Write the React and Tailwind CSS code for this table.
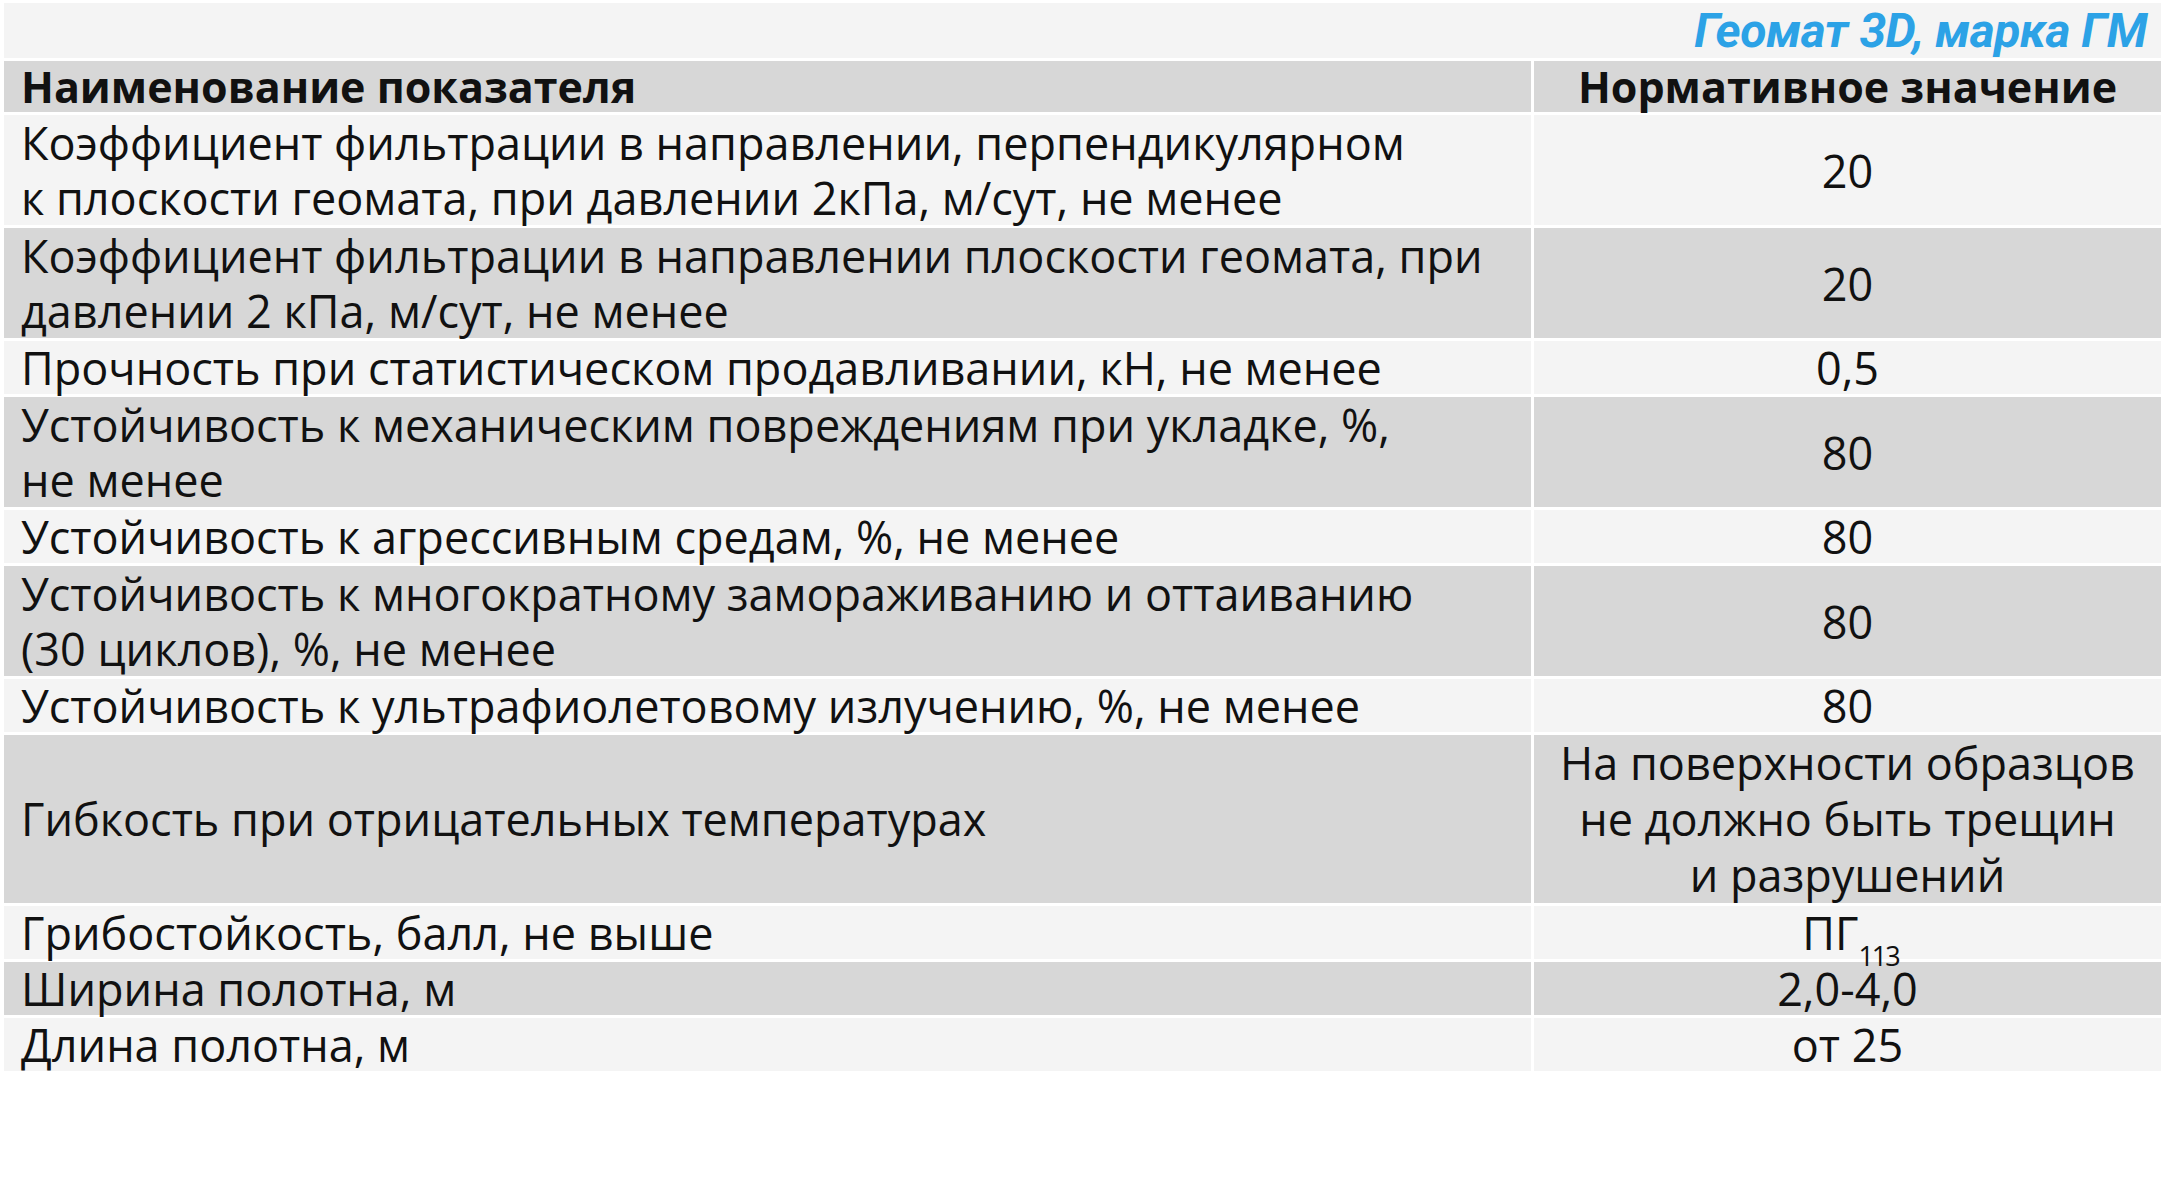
const rows = [
  { name: ['Коэффициент фильтрации в направлении, перпендикулярном', 'к плоскости геомата, при давлении 2кПа, м/сут, не менее'], value: ['20'] },
  { name: ['Коэффициент фильтрации в направлении плоскости геомата, при', 'давлении 2 кПа, м/сут, не менее'], value: ['20'] },
  { name: ['Прочность при статистическом продавливании, кН, не менее'], value: ['0,5'] },
  { name: ['Устойчивость к механическим повреждениям при укладке, %,', 'не менее'], value: ['80'] },
  { name: ['Устойчивость к агрессивным средам, %, не менее'], value: ['80'] },
  { name: ['Устойчивость к многократному замораживанию и оттаиванию', '(30 циклов), %, не менее'], value: ['80'] },
  { name: ['Устойчивость к ультрафиолетовому излучению, %, не менее'], value: ['80'] },
  { name: ['Гибкость при отрицательных температурах'], value: ['На поверхности образцов', 'не должно быть трещин', 'и разрушений'] },
  { name: ['Грибостойкость, балл, не выше'], value: 'pg' },
  { name: ['Ширина полотна, м'], value: ['2,0-4,0'] },
  { name: ['Длина полотна, м'], value: ['от 25'] },
]

// line height per number of lines in the row
const leading = { 1: 'leading-[53px]', 2: 'leading-[55px]', 3: 'leading-[56px]' }

function Lines({ lines }) {
  return lines.map((l, i) => <div key={i} className="whitespace-nowrap">{l}</div>)
}

export default function App() {
  return (
    <div className="min-h-screen bg-white pt-[3px] pl-[4px] font-['Open_Sans',sans-serif] text-[#111]">
      <div className="grid w-[2157px] grid-cols-[1527px_627px] gap-[3px]">
        <div className="col-span-2 flex h-[55px] items-center justify-end bg-[#f4f4f4] pr-[14px]">
          <span className="font-['Liberation_Sans_Narrow','Roboto',sans-serif] text-[48px] font-bold italic leading-none tracking-[-0.5px] text-[#2ca2e6]">
            Геомат 3D, марка ГМ
          </span>
        </div>

        <div className="bg-[#d7d7d7] pl-[17px] text-[43px] font-bold leading-[51px]">Наименование показателя</div>
        <div className="bg-[#d7d7d7] text-center text-[43px] font-bold leading-[51px]">Нормативное значение</div>

        {rows.map((r, i) => {
          const bg = i % 2 === 0 ? 'bg-[#f4f4f4]' : 'bg-[#d7d7d7]'
          const n = Math.max(r.name.length, Array.isArray(r.value) ? r.value.length : 1)
          const lh = leading[n]
          return [
            <div key={'n' + i} className={`${bg} ${lh} flex flex-col justify-center pl-[17px] text-[45px]`}>
              <Lines lines={r.name} />
            </div>,
            <div key={'v' + i} className={`${bg} ${lh} flex flex-col justify-center text-center text-[45px]`}>
              {r.value === 'pg' ? (
                <div className="pl-[6px]">
                  ПГ<span className="relative top-[16px] text-[27px] leading-none tracking-[-2px]">113</span>
                </div>
              ) : (
                <Lines lines={r.value} />
              )}
            </div>,
          ]
        })}
      </div>
    </div>
  )
}
